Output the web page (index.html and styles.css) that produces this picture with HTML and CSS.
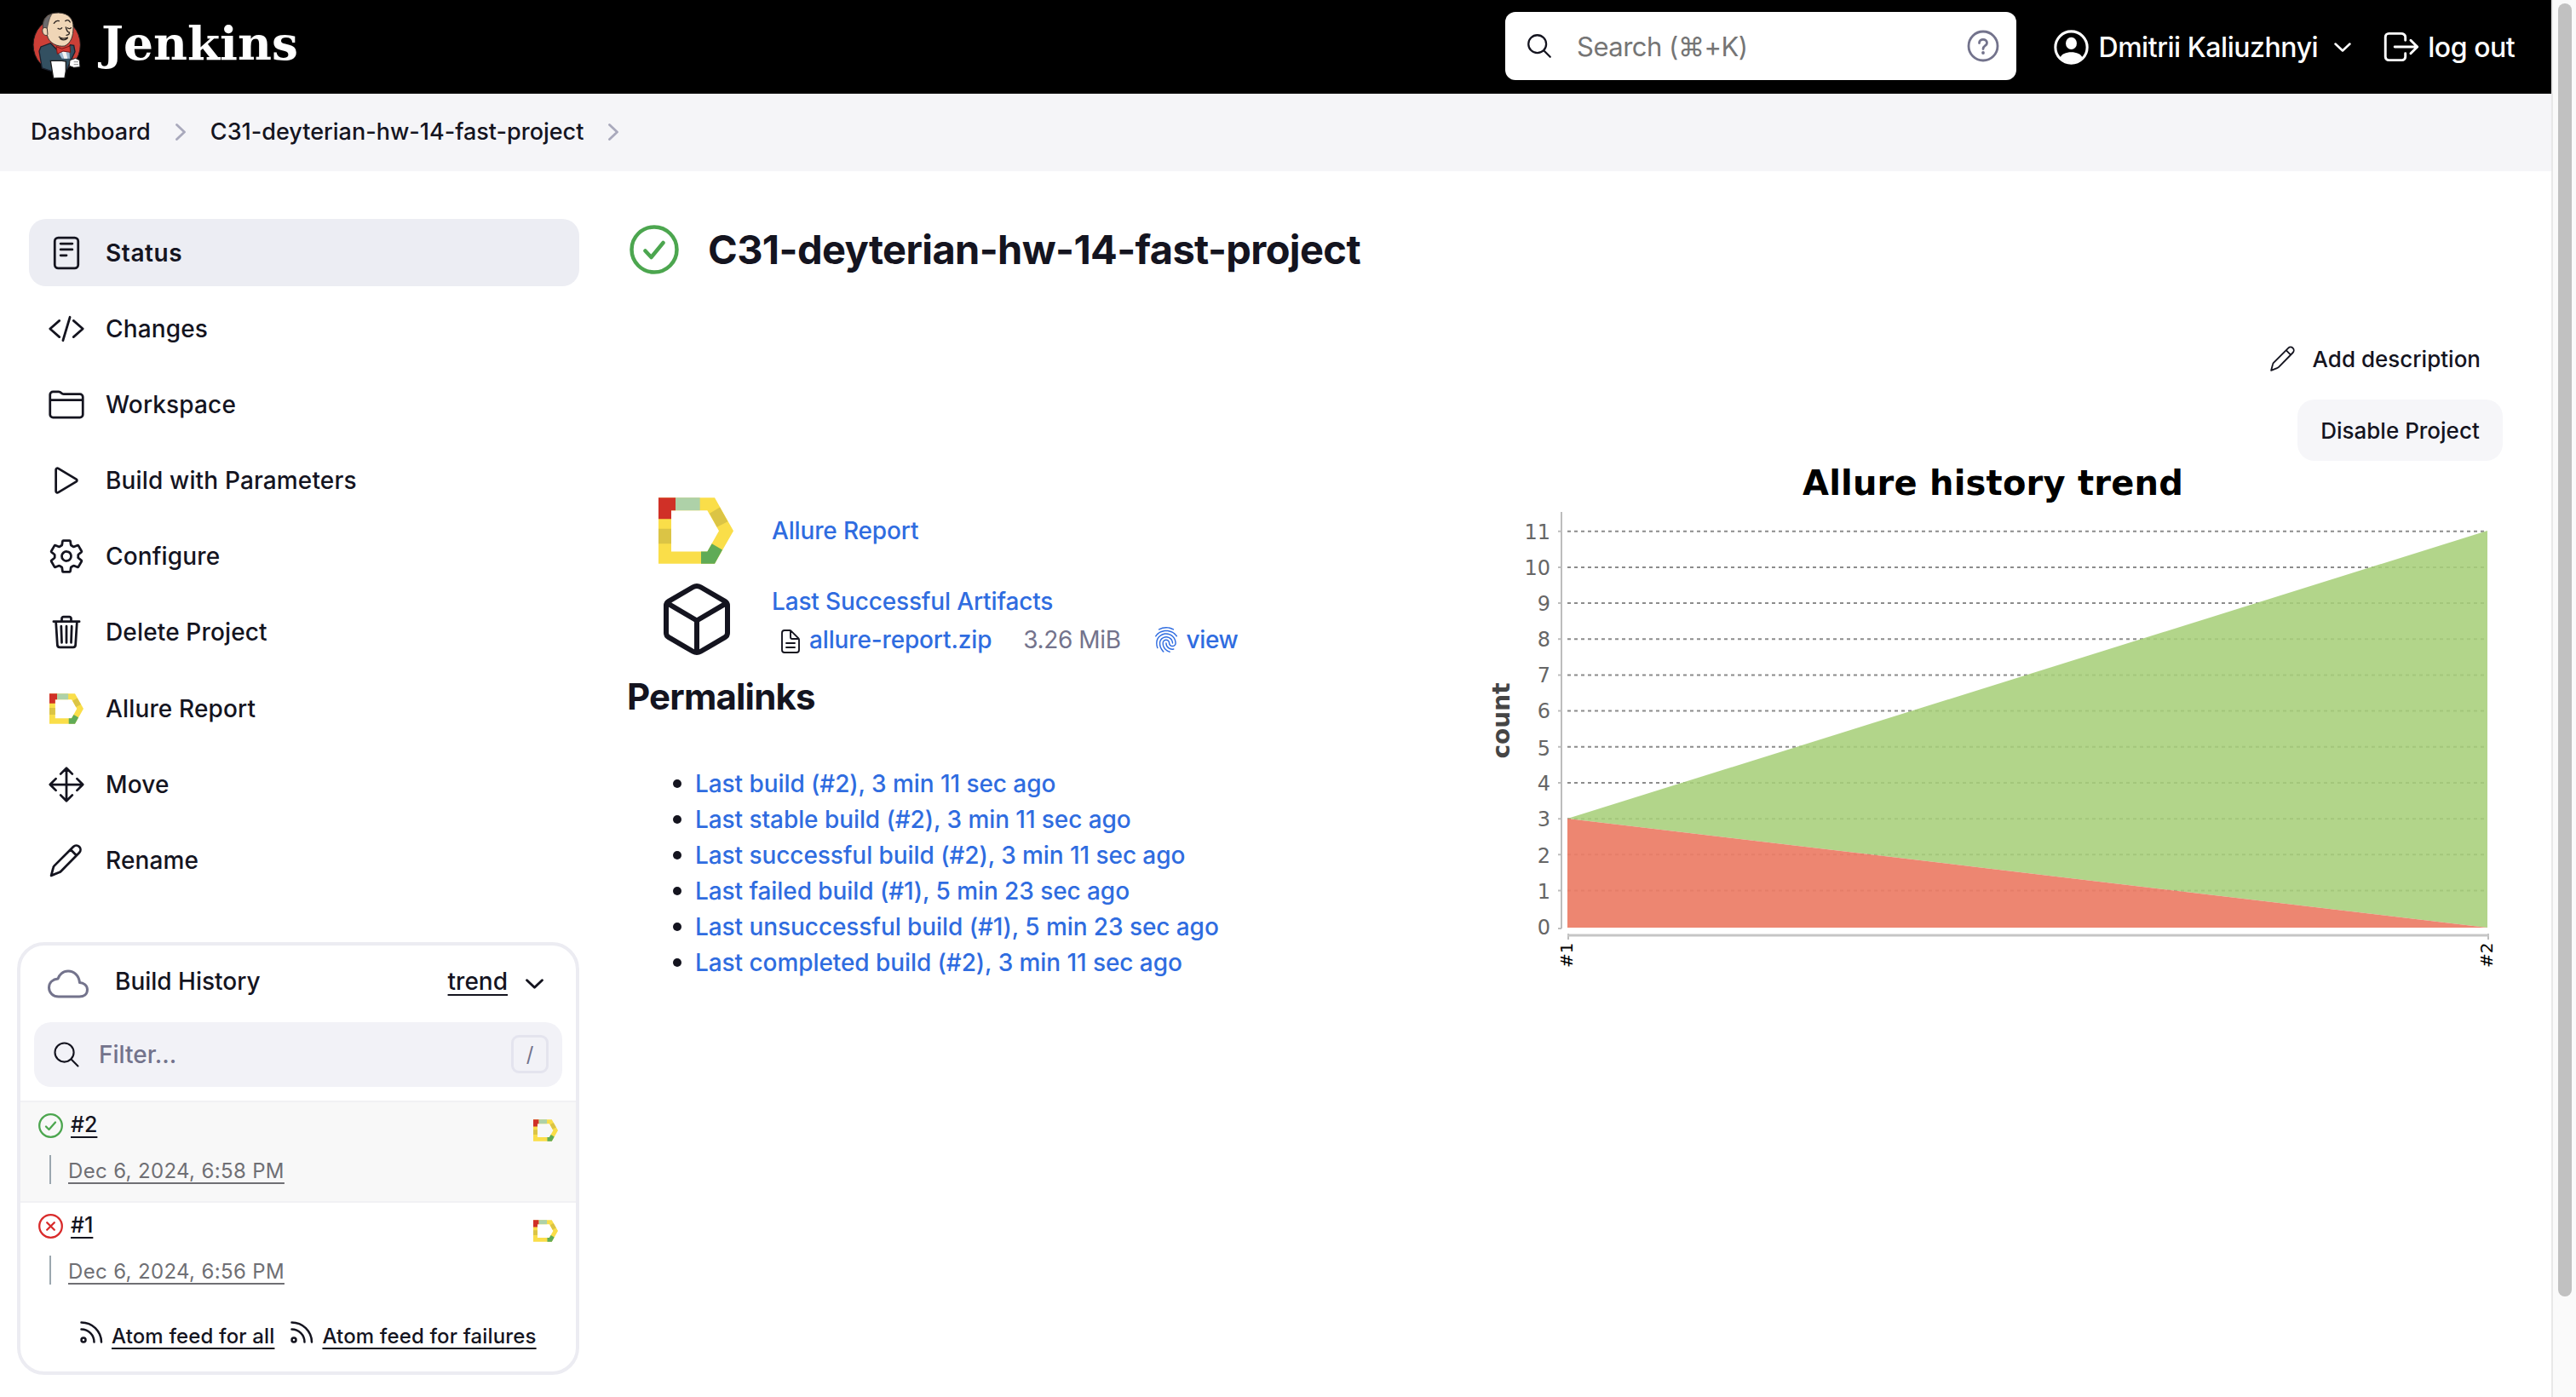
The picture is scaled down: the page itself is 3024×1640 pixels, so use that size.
FILE: index.html
```html
<!DOCTYPE html>
<html lang="en">
<head>
<meta charset="utf-8">
<title>C31-deyterian-hw-14-fast-project [Jenkins]</title>
<link rel="stylesheet" href="styles.css">
</head>
<body>
<svg class="sprite" aria-hidden="true">
  <symbol id="allure" viewBox="0 0 264 233">
    <path fill="#fade49" d="M0 0H198L264 117 198 233H0ZM45 45V190H172L213 117 172 45Z" fill-rule="evenodd"/>
    <path fill="#d03027" d="M0 0H60V45H45V75H0Z"/>
    <path fill="#aed1a8" d="M60 0H146V45H60Z"/>
    <path fill="#dbc445" d="M0 110H45V162H0ZM180 56L216 34 244 84 206 104Z"/>
    <path fill="#60ab56" d="M150 233V190H172L188 162 225 184 198 233Z"/>
  </symbol>
  <symbol id="search" viewBox="0 0 512 512"><path d="M221.09 64a157.09 157.09 0 10157.09 157.09A157.1 157.1 0 00221.09 64zM338.29 338.29L448 448"/></symbol>
  <symbol id="pencil" viewBox="0 0 512 512"><path d="M48 464l28-108a56 56 0 0114-26L350 70a57 57 0 0181 81L182 404a70 70 0 01-30 18L48 464zM312 108l81 81"/></symbol>
  <symbol id="right" viewBox="0 0 12 20"><path d="M1.500 1.500L10.500 10 1.500 18.500"/></symbol>
  <symbol id="down" viewBox="0 0 20 11"><path d="M1.500 1.500L10 9.500 18.500 1.500"/></symbol>
  <symbol id="rss" viewBox="0 0 27 26"><circle cx="4" cy="22" r="2.500"/><path d="M1.500 9.500A15 15 0 0116.500 24.500M1.500 1.500A23.500 23.500 0 0125 24.500"/></symbol>
</svg>
<div class="app">
  <header class="header">
    <a class="brand">
      <svg class="butler" viewBox="0 0 300 330">
        <ellipse cx="140" cy="158" rx="83" ry="92" fill="#cc3f37" stroke="#1a1a1a" stroke-width="3"/>
        <path d="M88 240L78 180 84 165 118 152 160 196 188 158 200 160 204 182 190 212 176 245 150 250 120 250Z" fill="#335061" stroke="#1a1f2b" stroke-width="4"/>
        <path d="M140 176L158 206 186 206 184 176Z" fill="#9db8cf"/><path d="M158 182L166 206H178L172 182Z" fill="#f4f4f4"/>
        <path d="M92 95C88 66 106 45 146 45 182 46 199 68 198 96 198 130 190 150 168 162 142 166 112 152 106 124Z" fill="#f0d6b7" stroke="#3a3430" stroke-width="3"/>
        <path d="M92 106C88 80 96 60 122 50 112 66 110 84 106 100Z" fill="#6d6b6d" stroke="#3a3430" stroke-width="2"/>
        <path d="M106 100C92 92 86 104 91 116 96 126 104 126 108 122Z" fill="#f0d6b7" stroke="#3a3430" stroke-width="3"/>
        <g fill="none" stroke="#2c2522" stroke-width="4" stroke-linecap="round"><path d="M130 82Q138 70 148 74M170 74Q180 66 187 78M144 100Q152 106 158 98M178 98Q186 104 190 98M172 96Q176 114 184 114 186 122 174 124M148 130Q160 140 178 132M152 136Q166 146 178 134"/></g>
        <path d="M138 164L158 172 186 162 188 184 162 180 142 190Z" fill="#d33833" stroke="#7a1512" stroke-width="3"/>
        <path d="M118 214H158L172 216 172 250 168 274 128 276Z" fill="#fff" stroke="#1a1a1a" stroke-width="4"/>
        <path d="M186 212L206 205 220 212 222 236 200 238 184 232Z" fill="#fff" stroke="#1a1a1a" stroke-width="3"/><path d="M200 218H216M200 227H216" stroke="#555" stroke-width="2"/>
      </svg>
      <span class="wordmark">Jenkins</span>
    </a>
    <div class="searchbox">
      <svg class="ic ic-search"><use href="#search"/></svg>
      <span class="search-ph">Search (⌘+K)</span>
      <svg class="help" viewBox="0 0 38 38"><circle cx="19" cy="19" r="17"/><path d="M14.500 15.500C14.500 10 23.500 10 23.500 15.500 23.500 19 19 18.500 19 22.500"/><circle class="dot" cx="19" cy="27" r="1.900"/></svg>
    </div>
    <a class="user">
      <svg class="avatar" viewBox="0 0 40 40"><circle cx="20" cy="20" r="18.200" fill="none" stroke="#fff" stroke-width="3"/><ellipse cx="20" cy="15.500" rx="6.300" ry="7" fill="#fff"/><path fill="#fff" d="M7.500 32C9 23.500 31 23.500 32.500 32 26 39 14 39 7.500 32Z"/></svg>
      <span class="name">Dmitrii Kaliuzhnyi</span>
      <svg class="ic user-down"><use href="#down"/></svg>
    </a>
    <a class="logout">
      <svg class="ic ic-logout" viewBox="0 0 512 512"><path d="M304 336v40a40 40 0 01-40 40H104a40 40 0 01-40-40V136a40 40 0 0140-40h152c22.090 0 48 17.910 48 40v40M368 336l80-80-80-80M176 256h256"/></svg>
      <span class="name">log out</span>
    </a>
  </header>
  <nav class="crumbs">
    <a>Dashboard</a><svg class="ic sep"><use href="#right"/></svg>
    <a>C31-deyterian-hw-14-fast-project</a><svg class="ic sep"><use href="#right"/></svg>
  </nav>
  <div class="page">
    <aside class="side">
      <ul class="tasks">
        <li class="task active"><svg class="ic i44" viewBox="0 0 512 512"><rect x="96" y="48" width="320" height="416" rx="48"/><path d="M176 128h160M176 208h160M176 288h80"/></svg><span>Status</span></li>
        <li class="task"><svg class="ic i44" viewBox="0 0 512 512"><path d="M160 368L32 256l128-112M352 368l128-112-128-112M304 96l-96 320"/></svg><span>Changes</span></li>
        <li class="task"><svg class="ic i44" viewBox="0 0 512 512"><path d="M440 432H72a40 40 0 01-40-40V120a40 40 0 0140-40h75.890a40 40 0 0122.190 6.720l27.840 18.560a40 40 0 0022.190 6.720H440a40 40 0 0140 40v240a40 40 0 01-40 40zM32 192h448"/></svg><span>Workspace</span></li>
        <li class="task"><svg class="ic i44" viewBox="0 0 512 512"><path d="M112 111v290c0 17.440 17 28.520 31 20.160l247.900-148.370c12.120-7.250 12.120-26.330 0-33.580L143 90.840c-14-8.360-31 2.720-31 20.160z"/></svg><span>Build with Parameters</span></li>
        <li class="task"><svg class="ic i44" viewBox="0 0 512 512"><path d="M262.290 192.310a64 64 0 1057.400 57.400 64.130 64.130 0 00-57.400-57.400zM416.390 256a154.340 154.340 0 01-1.530 20.790l45.210 35.460a10.810 10.810 0 012.450 13.750l-42.770 74a10.810 10.810 0 01-13.140 4.590l-44.900-18.080a16.110 16.110 0 00-15.170 1.750A164.480 164.480 0 01325 400.800a15.940 15.940 0 00-8.820 12.140l-6.730 47.890a11.080 11.080 0 01-10.680 9.170h-85.540a11.110 11.110 0 01-10.690-8.870l-6.720-47.820a16.070 16.070 0 00-9-12.220 155.300 155.300 0 01-21.460-12.570 16 16 0 00-15.110-1.710l-44.890 18.070a10.810 10.810 0 01-13.140-4.580l-42.770-74a10.800 10.800 0 012.450-13.750l38.210-30a16.050 16.050 0 006-14.080c-.36-4.170-.58-8.330-.58-12.500s.21-8.270.58-12.350a16 16 0 00-6.070-13.940l-38.190-30A10.810 10.810 0 0149.480 186l42.770-74a10.810 10.810 0 0113.140-4.590l44.900 18.080a16.110 16.110 0 0015.170-1.750A164.480 164.480 0 01187 111.200a15.940 15.940 0 008.820-12.140l6.730-47.890A11.080 11.080 0 01213.230 42h85.540a11.110 11.110 0 0110.690 8.870l6.720 47.820a16.070 16.070 0 009 12.220 155.300 155.300 0 0121.460 12.570 16 16 0 0015.110 1.710l44.890-18.070a10.810 10.810 0 0113.140 4.580l42.770 74a10.800 10.800 0 01-2.450 13.750l-38.210 30a16.050 16.050 0 00-6.050 14.080c.33 4.140.55 8.300.55 12.470z"/></svg><span>Configure</span></li>
        <li class="task"><svg class="ic i44" viewBox="0 0 512 512"><path d="M112 112l20 320c.95 18.490 14.400 32 32 32h184c17.670 0 30.870-13.510 32-32l20-320M80 112h352M192 112V72a23.930 23.930 0 0124-24h80a23.930 23.930 0 0124 24v40M256 176v224M184 176l8 224M328 176l-8 224"/></svg><span>Delete Project</span></li>
        <li class="task"><svg class="i44 allure-task"><use href="#allure"/></svg><span>Allure Report</span></li>
        <li class="task"><svg class="ic i44" viewBox="0 0 512 512"><path d="M176 112l80-80 80 80M256 32v448M176 400l80 80 80-80M400 176l80 80-80 80M112 176l-80 80 80 80M32 256h448"/></svg><span>Move</span></li>
        <li class="task"><svg class="ic i44"><use href="#pencil"/></svg><span>Rename</span></li>
      </ul>
      <section class="history">
        <div class="history-head">
          <svg class="ic cloud" viewBox="0 0 512 512"><path d="M400 240c-8.890-89.540-71-144-144-144-69 0-113.440 48.200-128 96-60 6-112 43.590-112 112 0 66 54 112 120 112h260c55 0 100-27.440 100-88 0-59.820-53-85.760-96-88z"/></svg>
          <span class="history-title">Build History</span>
          <a class="trend">trend</a>
          <svg class="ic trend-down"><use href="#down"/></svg>
        </div>
        <div class="filter">
          <svg class="ic ic-filter"><use href="#search"/></svg>
          <span class="filter-ph">Filter...</span>
          <kbd class="key">/</kbd>
        </div>
        <div class="build shaded">
          <div class="build-top">
            <svg class="ic status ok" viewBox="0 0 29 29"><circle cx="14.500" cy="14.500" r="13.300"/><path d="M9 15.500L12.500 19 20 10.500"/></svg>
            <a class="num">#2</a><svg class="allure-s"><use href="#allure"/></svg>
          </div>
          <div class="build-date"><a>Dec 6, 2024, 6:58 PM</a></div>
        </div>
        <div class="build">
          <div class="build-top">
            <svg class="ic status bad" viewBox="0 0 29 29"><circle cx="14.500" cy="14.500" r="13.300"/><path d="M10.200 10.200L18.800 18.800M18.800 10.200L10.200 18.800"/></svg>
            <a class="num">#1</a><svg class="allure-s"><use href="#allure"/></svg>
          </div>
          <div class="build-date"><a>Dec 6, 2024, 6:56 PM</a></div>
        </div>
        <div class="feeds">
          <svg class="ic rss"><use href="#rss"/></svg><a>Atom feed for all</a>
          <svg class="ic rss"><use href="#rss"/></svg><a>Atom feed for failures</a>
        </div>
      </section>
    </aside>
    <main class="main">
      <div class="title">
        <svg class="ic title-ok" viewBox="0 0 58 58"><circle cx="29" cy="29" r="26.500"/><path d="M18.500 30.500L25.500 38 39.500 21"/></svg>
        <h1>C31-deyterian-hw-14-fast-project</h1>
      </div>
      <div class="columns">
        <div class="left">
          <div class="art-row">
            <svg class="allure-l"><use href="#allure"/></svg>
            <a class="link">Allure Report</a>
          </div>
          <div class="art-row second">
            <svg class="ic cube" viewBox="0 0 512 512"><path d="M448 341.370V170.610A32 32 0 00432.110 143l-152-88.460a47.940 47.940 0 00-48.240 0L79.890 143A32 32 0 0064 170.610v170.760A32 32 0 0079.890 369l152 88.460a48 48 0 0048.240 0l152-88.460A32 32 0 00448 341.370zM69 153.990l187 110 187-110M256 463.990v-200"/></svg>
            <div class="files">
              <a class="link block">Last Successful Artifacts</a>
              <div class="file">
                <svg class="ic doc" viewBox="0 0 512 512"><path d="M416 221.250V416a48 48 0 01-48 48H144a48 48 0 01-48-48V96a48 48 0 0148-48h98.750a32 32 0 0122.620 9.370l141.260 141.260a32 32 0 019.370 22.620zM256 56v120a32 32 0 0032 32h120M176 288h160M176 368h160"/></svg>
                <a class="link zip">allure-report.zip</a>
                <span class="size">3.26 MiB</span>
                <svg class="finger" viewBox="0 0 512 512"><path d="M390.420 75.280a10.450 10.450 0 01-5.320-1.440C340.720 50.080 302.350 40 256.350 40c-45.770 0-89.230 11.280-128.760 33.840C122 77 115.110 74.800 111.870 69a12.400 12.400 0 014.630-16.320A281.810 281.810 0 01256.350 16c49.230 0 92.230 11.280 139.390 36.480a12 12 0 014.850 16.080 11.300 11.300 0 01-10.170 6.720zm-330.790 126a11.730 11.730 0 01-6.700-2.160 12.260 12.260 0 01-2.780-16.800c22.890-33.600 52-60 86.690-78.480 72.580-38.840 165.850-39.120 238.360-.24 34.680 18.480 63.800 44.640 86.690 78a12.290 12.290 0 01-2.780 16.800 11.260 11.260 0 01-16.180-2.880c-20.800-30.240-47.150-54-78.360-70.560-66-35.520-150.270-35.520-216.110.24-31.440 16.800-57.790 40.800-78.590 71.040a11.180 11.180 0 01-10.240 5.040zM204.100 491a10.660 10.660 0 01-8.090-3.600C175.900 466.480 165 453 149.550 424c-16-29.520-24.270-65.520-24.270-104.160 0-71.280 58.950-129.360 131.300-129.360s131.300 58.080 131.300 129.360a11.560 11.560 0 11-23.110 0c0-58.080-48.550-105.360-108.190-105.360S148.390 261.760 148.390 319.840c0 34.560 7.400 66.480 21.500 92.400 14.800 27.600 25 39.360 42.770 58.080a12.670 12.670 0 010 17A12.440 12.440 0 01204.100 491zm165.750-44.400c-27.510 0-51.780-7.200-71.660-21.360a129.100 129.100 0 01-55-105.360 11.570 11.570 0 1123.120 0 104.280 104.280 0 0044.840 85.440c16.410 11.520 35.600 17 58.720 17a147.410 147.410 0 0024-2.400c6.240-1.200 12.250 3.120 13.400 9.840a11.920 11.920 0 01-9.470 13.920 152.280 152.280 0 01-27.950 2.880zM323.380 496a13 13 0 01-3-.48c-36.760-10.560-60.800-24.720-86.230-50.400-32.600-33.840-50.500-78.720-50.500-126.720 0-38.880 31.900-70.560 71.190-70.560s71.200 31.680 71.200 70.560c0 25.680 21.500 46.560 48.080 46.560s48.080-20.880 48.080-46.560c0-90.480-75.130-163.920-167.590-163.920-65.650 0-125.750 37.920-152.790 96.720-9 19.440-13.640 42.240-13.640 67.200 0 18.720 1.610 48.240 15.480 86.640 2.320 6.240-.69 13.200-6.700 15.360a11.340 11.340 0 01-14.790-7 276.390 276.390 0 01-16.880-95c0-28.800 5.320-55 15.720-77.760 30.750-67 98.940-110.400 173.600-110.400 105.180 0 190.710 84.240 190.710 187.920 0 38.880-32.140 70.560-71.660 70.560s-71.660-31.680-71.660-70.560c0-25.440-21.260-46.320-47.850-46.320s-48.080 20.880-48.080 46.560c0 41.040 15.260 79.440 43.230 108.480 22 23.040 43 35.280 75.590 44.640 6.240 1.920 9.710 8.640 8.090 14.880-1.390 5.520-6.010 8.640-10.920 8.640z"/></svg>
                <a class="link view">view</a>
              </div>
            </div>
          </div>
          <h2>Permalinks</h2>
          <ul class="permalinks">
            <li><a class="link">Last build (#2), 3 min 11 sec ago</a></li>
            <li><a class="link">Last stable build (#2), 3 min 11 sec ago</a></li>
            <li><a class="link">Last successful build (#2), 3 min 11 sec ago</a></li>
            <li><a class="link">Last failed build (#1), 5 min 23 sec ago</a></li>
            <li><a class="link">Last unsuccessful build (#1), 5 min 23 sec ago</a></li>
            <li><a class="link">Last completed build (#2), 3 min 11 sec ago</a></li>
          </ul>
        </div>
        <div class="right">
          <a class="describe"><svg class="ic ic-desc"><use href="#pencil"/></svg><span>Add description</span></a>
          <button class="disable"><span>Disable Project</span></button>
          <svg class="chart" viewBox="1740 541 1200 609" width="1200" height="609">
            <text class="c-title" x="2339.500" y="581" text-anchor="middle">Allure history trend</text>
            <path class="grid" d="M1840 623.700H2920M1840 665.900H2920M1840 708.100H2920M1840 750.200H2920M1840 792.400H2920M1840 834.600H2920M1840 876.800H2920M1840 919H2920M1840 961.200H2920M1840 1003.300H2920M1840 1045.500H2920"/>
            <path class="passed" d="M1840 961L2920 623V1089Z"/>
            <path class="failed" d="M1840 961V1089H2920Z"/>
            <path class="axis" d="M1833 601V1090M1829 623.700h4M1829 665.900h4M1829 708.100h4M1829 750.200h4M1829 792.400h4M1829 834.600h4M1829 876.800h4M1829 919h4M1829 961.200h4M1829 1003.300h4M1829 1045.500h4M1829 1090h4M1841 1096v7M2921 1096v7"/>
            <path class="x-axis" d="M1840 1098H2922"/>
            <g class="ticks" text-anchor="end">
              <text x="1820" y="632.500">11</text><text x="1820" y="674.500">10</text><text x="1820" y="716.500">9</text><text x="1820" y="758.500">8</text><text x="1820" y="801">7</text><text x="1820" y="843">6</text><text x="1820" y="886.500">5</text><text x="1820" y="928">4</text><text x="1820" y="970">3</text><text x="1820" y="1012.500">2</text><text x="1820" y="1054.500">1</text><text x="1820" y="1096.500">0</text>
            </g>
            <text class="y-label" transform="translate(1772 846) rotate(-90)" text-anchor="middle">count</text>
            <text class="x-label" transform="translate(1846 1136) rotate(-90)">#1</text>
            <text class="x-label" transform="translate(2926 1136) rotate(-90)">#2</text>
          </svg>
        </div>
      </div>
    </main>
  </div>
</div>
<div class="scroll"><div class="thumb"></div></div>
</body>
</html>
```
FILE: styles.css
```css
* { box-sizing: border-box; }
body { margin: 0; width: 3024px; height: 1640px; overflow: hidden; display: flex; background: #fff; color: #14141f; font-family: Inter, "Liberation Sans", sans-serif; font-size: 28px; font-weight: 500; }
ul { list-style: none; margin: 0; padding: 0; }
h1, h2 { margin: 0; }
.sprite { position: absolute; width: 0; height: 0; }
svg { flex: none; display: block; overflow: visible; }
.ic { fill: none; stroke: currentColor; stroke-width: 32; stroke-linecap: round; stroke-linejoin: round; }
.i44 { width: 44px; height: 44px; }
.app { width: 2995px; height: 1640px; }
.scroll { width: 29px; height: 1640px; background: #fafafa; border-left: 2px solid #e8e8e8; padding: 4px 5px 0 6px; }
.thumb { height: 1518px; border-radius: 9px; background: #c1c1c1; }

.header { height: 110px; background: #000; color: #fff; display: flex; align-items: center; padding-left: 20px; font-size: 32px; }
.brand { display: flex; align-items: center; width: 1747px; }
.butler { width: 100px; height: 110px; }
.wordmark { font-family: "DejaVu Serif", serif; font-weight: 700; font-size: 55px; line-height: 70px; padding-bottom: 8px; margin-left: -1px; }
.searchbox { width: 600px; height: 80px; margin-bottom: 2px; border-radius: 12px; background: #fff; display: flex; align-items: center; padding: 0 20px 0 23px; }
.ic-search { width: 34px; height: 34px; color: #14141f; stroke-width: 34; }
.search-ph { color: #757575; font-weight: 400; font-size: 31px; letter-spacing: -.5px; margin-left: 27px; flex: 1; }
.help { width: 38px; height: 38px; fill: none; stroke: #73738c; stroke-width: 2.8; stroke-linecap: round; }
.help .dot { fill: #73738c; stroke: none; }
.user { display: flex; align-items: center; margin-left: 43.5px; }
.name { letter-spacing: -.45px; }
.avatar { width: 41px; height: 41px; margin-right: 12px; }
.user-down { width: 20px; height: 11px; margin-left: 19px; stroke-width: 2.5; }
.logout { display: flex; align-items: center; margin-left: 34px; }
.ic-logout { width: 50px; height: 50px; margin-right: 6px; stroke-width: 30; }

.crumbs { height: 91px; background: #f5f5f8; display: flex; align-items: center; padding: 0 0 2px 36px; font-size: 27px; }
.sep { width: 12px; height: 20px; margin: 0 29px; color: #a9a9bc; stroke-width: 2.8; }

.page { display: flex; }
.side { width: 738px; padding: 56px 0 0 20px; }
.tasks { display: flex; flex-direction: column; gap: 10.2px; margin-left: 14px; }
.task { width: 646px; height: 79px; border-radius: 20px; display: flex; align-items: center; padding-left: 22px; gap: 24px; letter-spacing: .15px; }
.active { background: #ecedf3; font-weight: 600; letter-spacing: .6px; }
.allure-task { width: 40px; height: 36px; margin: 0 2px; }

.history { width: 660px; height: 508px; margin-top: 56px; border: 4px solid #ececf2; border-radius: 32px; overflow: hidden; }
.history-head { display: flex; align-items: center; height: 90px; padding: 0 38px 6px 32px; }
.cloud { width: 48px; height: 48px; color: #73738c; margin-top: 7px; }
.history-title { margin-left: 31px; flex: 1; }
a { color: inherit; }
.trend, .num, .build-date a, .feeds a { text-decoration: underline; text-decoration-thickness: 2px; text-underline-offset: 5px; }
.trend-down { width: 21px; height: 12px; margin-left: 21px; margin-top: 7px; stroke-width: 2.8; }
.filter { height: 76px; margin: 0 16px; border-radius: 20px; background: #f2f2f7; display: flex; align-items: center; padding: 0 16px 0 20px; }
.ic-filter { width: 36px; height: 36px; stroke-width: 30; }
.filter-ph { color: #73738c; margin-left: 20px; flex: 1; }
.key { width: 44px; height: 45px; border: 3px solid #e4e4ee; border-radius: 9px; text-align: center; font: 400 24px/39px Inter, sans-serif; color: #73738c; }
.build { height: 120px; padding: 13px 21px 0; }
.shaded { margin-top: 16px; background: #f8f8f8; border-top: 2px solid #f1f1f4; border-bottom: 2px solid #f1f1f4; }
.build-top { display: flex; height: 30px; align-items: center; font-size: 25px; }
.status { width: 29px; height: 29px; stroke-width: 2.3; }
.ok { color: #4ca64f; }
.bad { color: #d92b2b; }
.num { margin-left: 9px; flex: 1; padding-bottom: 4px; }
.allure-s { width: 29px; height: 26px; margin-top: 10px; }
.build-date { margin: 19px 0 0 13px; height: 34px; border-left: 2px solid #9ba7af; padding-left: 20px; font-size: 24px; line-height: 38px; font-weight: 400; letter-spacing: .35px; color: #6f6f74; }
.feeds { display: flex; align-items: center; height: 40px; margin: 17px 0 0 70px; font-size: 24px; letter-spacing: .15px; }
.rss { width: 27px; height: 26px; margin-right: 10px; margin-bottom: 9px; stroke-width: 2.5; }
.feeds .rss ~ .rss { margin-left: 19px; }

.main { width: 2257px; padding-top: 56px; }
.title { display: flex; align-items: center; height: 72px; }
.title-ok { width: 58px; height: 58px; color: #4ca64f; stroke-width: 4.5; margin-left: 1px; }
h1 { font-size: 47px; line-height: 60px; margin-left: 34px; font-weight: 700; letter-spacing: -.62px; }
.columns { display: flex; }
.left { width: 1002px; padding-top: 255px; }
.link { color: #2f6ce0; text-decoration: none; letter-spacing: -.07px; }
.art-row { display: flex; padding-left: 35px; align-items: center; height: 78px; }
.allure-l { width: 88px; height: 78px; margin-right: 45px; }
.art-row .link { letter-spacing: -.15px; }
.second { height: 84px; margin-top: 23px; }
.cube { width: 96px; height: 96px; margin: 0 40px 0 -3px; stroke-width: 32; }
.files { padding-top: 4px; }
.block { display: block; line-height: 44px; }
.file { display: flex; align-items: center; height: 46px; }
.doc { width: 32px; height: 32px; margin: 4px 6px 0 6px; stroke-width: 30; }
.size { color: #73738c; font-weight: 400; letter-spacing: -.4px; margin: 0 37px 0 37px; }
.finger { width: 32px; height: 32px; fill: #2f6ce0; margin-right: 8px; }
.art-row .view { letter-spacing: -.4px; }
h2 { font-size: 42px; line-height: 52px; margin: 23px 0 0 -2px; letter-spacing: -.8px; }
.permalinks { margin-top: 55px; }
.permalinks li { height: 42px; line-height: 42px; display: flex; align-items: center; padding-left: 52px; }
.permalinks li::before { content: ""; width: 10px; height: 10px; border-radius: 50%; background: #14141f; margin-right: 16px; }
.right { width: 1200px; display: flex; flex-direction: column; align-items: flex-end; }
.describe { display: flex; align-items: center; height: 72px; margin: 56px 28px 0 0; font-size: 26px; }
.ic-desc { width: 34px; height: 34px; margin-right: 18px; stroke-width: 28; }
.disable { width: 241px; height: 72px; margin-top: 12px; margin-right: 2px; border: 0; border-radius: 20px; background: #f6f6f9; color: inherit; font: 500 26px Inter, sans-serif; padding: 0; white-space: nowrap; }
.chart { font-family: "DejaVu Sans", sans-serif; }
.c-title { font-size: 40px; font-weight: 700; fill: #000; letter-spacing: .2px; }
.grid { fill: none; stroke: #8c8c8c; stroke-width: 2; stroke-dasharray: 4 4; }
.passed { fill: #a7cf79; fill-opacity: .87; }
.failed { fill: #ec7d66; fill-opacity: .93; }
.axis { fill: none; stroke: #bdbdbd; stroke-width: 2; }
.x-axis { stroke: #c6c6c6; stroke-width: 3; }
.ticks { font-size: 24px; fill: #666; }
.y-label { font-size: 28px; font-weight: 700; fill: #454545; }
.x-label { font-size: 20px; fill: #000; }
```
